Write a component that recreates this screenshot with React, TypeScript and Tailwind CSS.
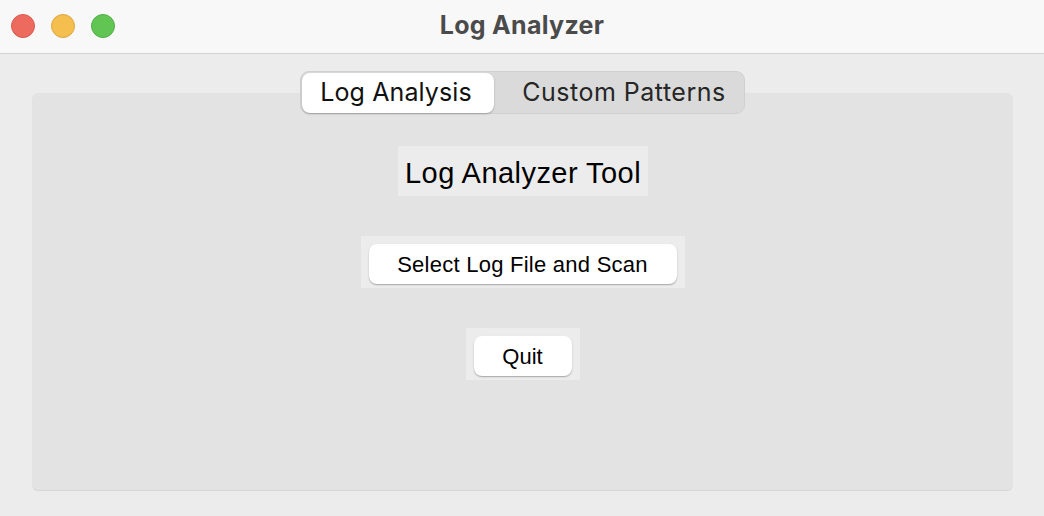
import React, { useState } from 'react';

const tabs = ['Log Analysis', 'Custom Patterns'];

const App = () => {
  const [active, setActive] = useState(0);

  return (
    <div className="w-[1044px] h-[516px] bg-[#ececec] flex flex-col overflow-hidden font-['Liberation_Sans',sans-serif]">
      {/* Title bar */}
      <div className="h-[54px] shrink-0 bg-[#f8f8f8] border-b border-[#d2d2d2] grid grid-cols-[1fr_auto_1fr] items-center px-[11px]">
        <div className="flex items-center gap-[16px] mt-[-2px]">
          <span className="w-[24px] h-[24px] rounded-full bg-[#ed6a5e] border border-[#d85a4f]" />
          <span className="w-[24px] h-[24px] rounded-full bg-[#f5bf4f] border border-[#dba742]" />
          <span className="w-[24px] h-[24px] rounded-full bg-[#61c554] border border-[#51ad45]" />
        </div>
        <span className="font-['Inter',sans-serif] font-bold text-[25px] text-[#4b4b4b] tracking-[0.3px] mt-[-2px]">
          Log Analyzer
        </span>
        <div />
      </div>

      {/* Body */}
      <div className="flex-1 flex flex-col items-center pt-[17px]">
        {/* Segmented control */}
        <div className="relative z-10 flex items-center h-[43px] w-[445px] p-[1px] rounded-[9px] bg-[#dadada] border border-[#d0d0d0] font-['Inter',sans-serif]">
          {tabs.map((t, i) => (
            <button
              key={t}
              onClick={() => setActive(i)}
              className={
                i === active
                  ? 'h-[40px] w-[192px] rounded-[8px] bg-white shadow-[0_1px_2px_rgba(0,0,0,0.25)] text-[25px] text-[#111] tracking-[0.1px] pr-[3px]'
                  : 'h-[40px] flex-1 rounded-[8px] text-[25px] text-[#262626] tracking-[0.5px] pl-[12px]'
              }
            >
              {t}
            </button>
          ))}
        </div>

        {/* Panel */}
        <div className="mt-[-21px] w-[981px] ml-[1px] h-[398px] rounded-[6px] bg-[#e3e3e3] border-b border-[#d6d6d6] flex flex-col items-center pt-[53px]">
          <div className="h-[50px] w-[250px] bg-[#ececec] flex items-center justify-center pt-[5px]">
            <span className="text-[29px] text-black tracking-[0.45px] pl-[1px]">Log Analyzer Tool</span>
          </div>

          <div className="mt-[40px] h-[52px] w-[324px] bg-[#ececec] flex justify-center pt-[8px]">
            <button className="h-[40px] w-[308px] rounded-[8px] bg-white shadow-[0_1px_1.5px_rgba(0,0,0,0.3)] text-[22px] text-black tracking-[0.25px]">
              Select Log File and Scan
            </button>
          </div>

          <div className="mt-[40px] h-[52px] w-[114px] bg-[#ececec] flex justify-center pt-[8px]">
            <button className="h-[40px] w-[98px] rounded-[8px] bg-white shadow-[0_1px_1.5px_rgba(0,0,0,0.3)] text-[22px] text-black">
              Quit
            </button>
          </div>
        </div>
      </div>
    </div>
  );
};

export default App;
